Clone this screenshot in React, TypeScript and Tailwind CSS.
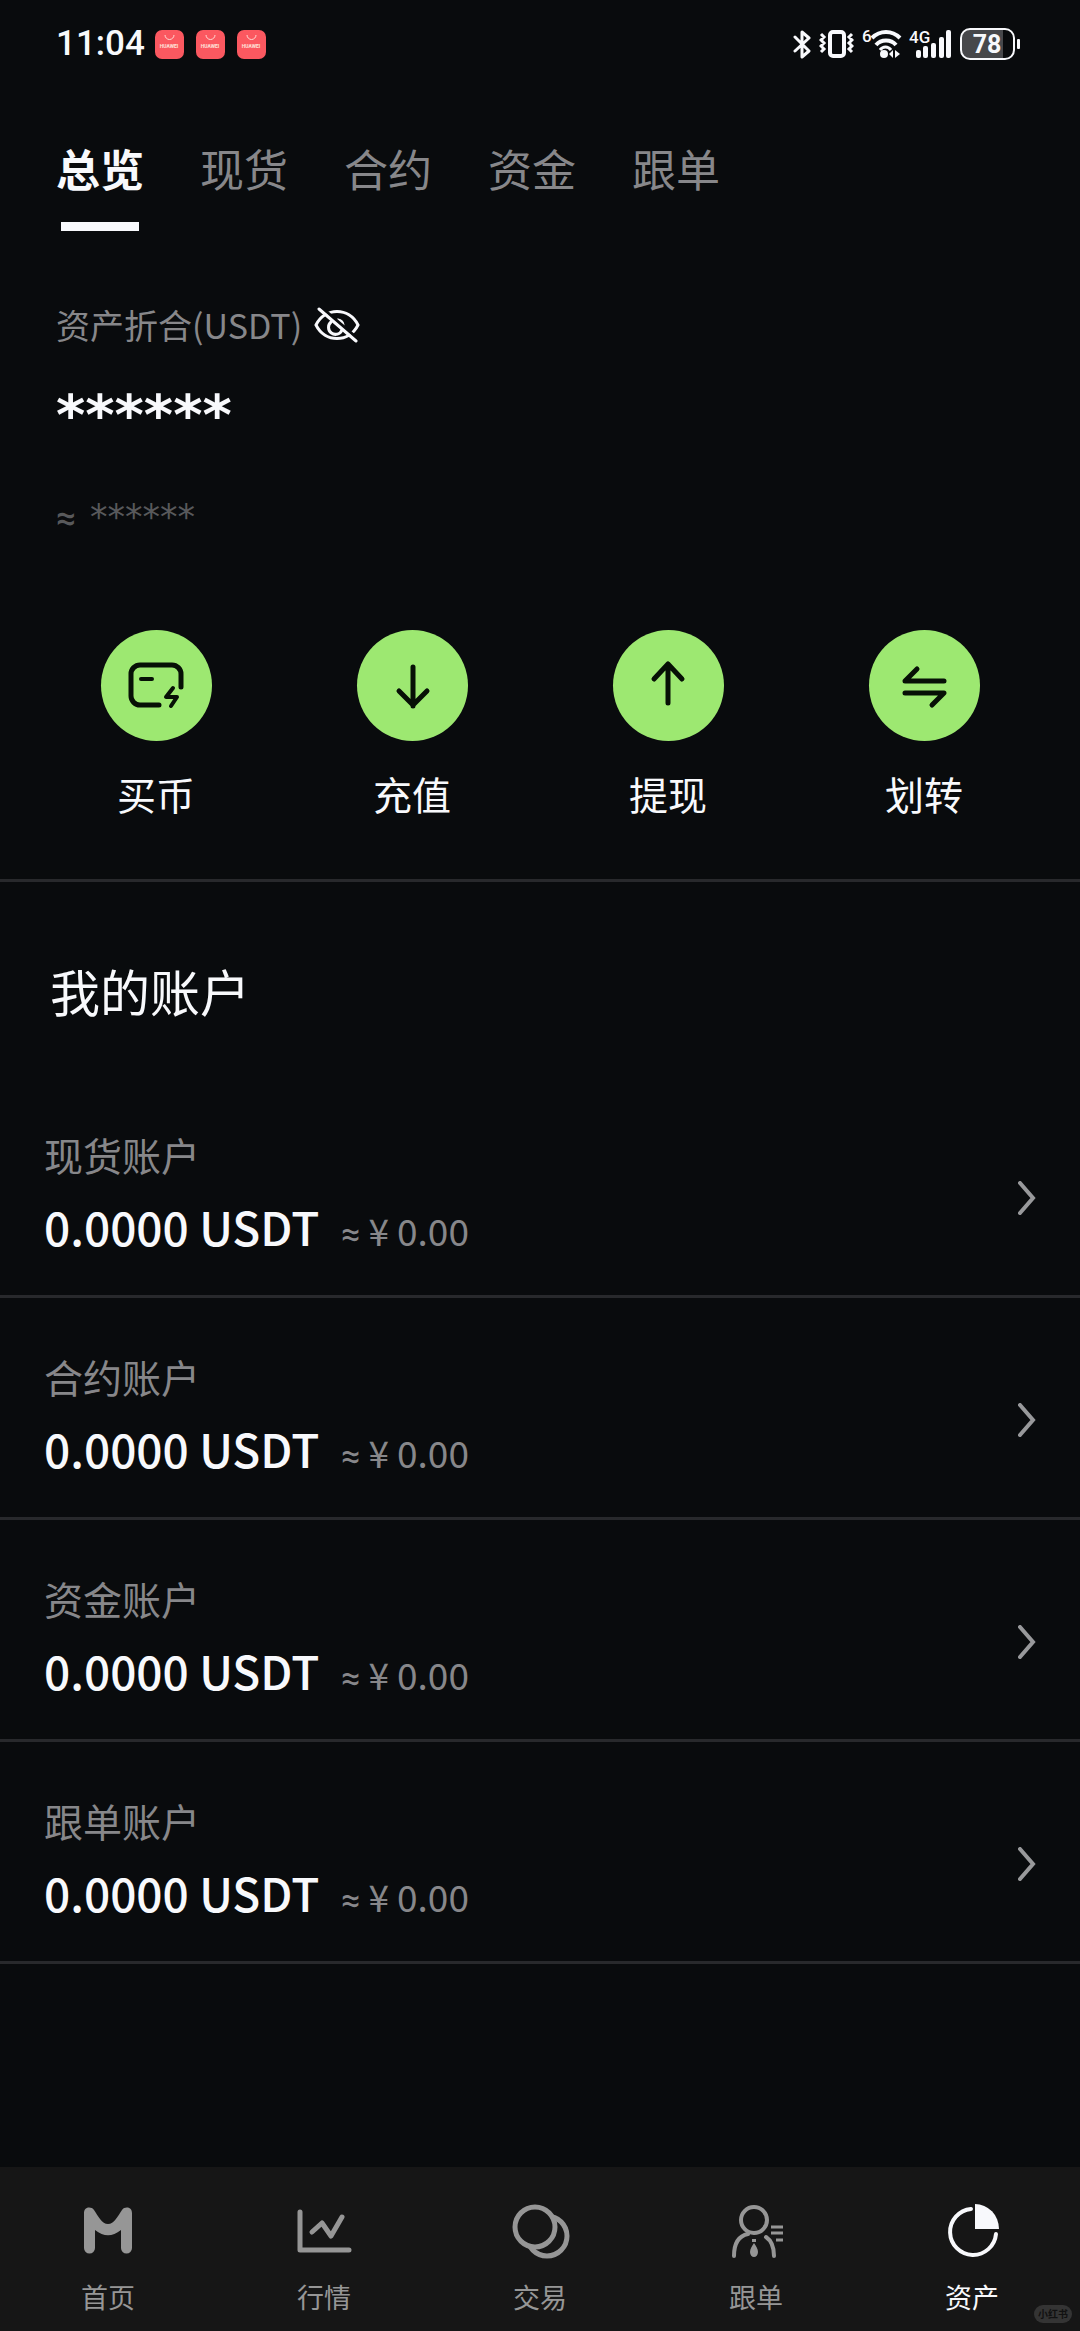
import { useState, type ReactNode } from "react";

const tabs = ["总览", "现货", "合约", "资金", "跟单"];

const accounts = [
  { name: "现货账户", amount: "0.0000", fiat: "0.00" },
  { name: "合约账户", amount: "0.0000", fiat: "0.00" },
  { name: "资金账户", amount: "0.0000", fiat: "0.00" },
  { name: "跟单账户", amount: "0.0000", fiat: "0.00" },
];

const actions: { label: string; icon: ReactNode }[] = [
  {
    label: "买币",
    icon: (
      <>
        <path d="M80 57V44a9 9 0 0 0-9-9H39a9 9 0 0 0-9 9v22a9 9 0 0 0 9 9h19" />
        <path d="M40 49h11M72 58l-7 9h11l-6 9" strokeWidth="4" />
      </>
    ),
  },
  { label: "充值", icon: <path d="M56 37v39M42 61l14 14 14-14" /> },
  { label: "提现", icon: <path d="M55 34v39M41 49l14-15 14 15" /> },
  { label: "划转", icon: <path d="M75 51H36l12-12M36 63h39L63 75" /> },
];

const navItems: { label: string; icon: ReactNode }[] = [
  {
    label: "首页",
    icon: (
      <path
        d="M8 14c0-6 7-7 10-3 4 6 8 14 14 14s10-8 14-14c3-4 10-3 10 3v35a5 5 0 0 1-11 0V31c-9 7-17 7-26 0v18a5 5 0 0 1-11 0z"
        fill="currentColor"
        stroke="none"
      />
    ),
  },
  {
    label: "行情",
    icon: (
      <>
        <path d="M8 13v38h49" />
        <path d="M20 33l10-9 9 13 11-19" />
      </>
    ),
  },
  {
    label: "交易",
    icon: (
      <>
        <circle cx="39" cy="37" r="20" />
        <circle cx="27" cy="28" r="20" fill="#161616" />
      </>
    ),
  },
  {
    label: "跟单",
    icon: (
      <g strokeWidth="4">
        <circle cx="30" cy="21" r="13" />
        <path d="M10 57c0-11 4-20 14-22M50 57c0-9-2-15-8-19" />
        <path d="M47 28h12M47 34h12M52 41h7" strokeWidth="3" strokeLinecap="butt" />
        <path
          d="M28 40h4v3h-4zM30 44c2 3 4 6 4 9s-2 5-4 5-4-2-4-5 2-6 4-9z"
          fill="currentColor"
          stroke="none"
        />
      </g>
    ),
  },
  {
    label: "资产",
    icon: (
      <>
        <path d="M31 10a23 23 0 1 0 25 25" strokeWidth="4" />
        <path d="M35 5a24 25 0 0 1 24 25H35z" fill="currentColor" stroke="none" />
      </>
    ),
  },
];

function StatusBar() {
  return (
    <header className="flex h-[88px] items-center justify-between pr-[59px] pl-14 font-[Roboto,sans-serif]">
      <div className="flex items-center gap-2.5">
        <span className="text-[35px] leading-[40px] font-medium">11:04</span>
        <div className="flex gap-3">
          {[0, 1, 2].map((i) => (
            <svg key={i} width="29" height="29" viewBox="0 0 29 29">
              <rect width="29" height="29" rx="7" fill="#fb5860" />
              <path d="M10 5a4 4 0 0 0 9 0" fill="none" stroke="#ffd9d4" />
              <text x="14" y="18" fontSize="5" fontWeight="700" fill="#ffe3dc" textAnchor="middle">
                HUAWEI
              </text>
            </svg>
          ))}
        </div>
      </div>

      <div className="flex gap-2">
        <svg width="18" height="38" viewBox="0 0 18 38" fill="none" stroke="currentColor" strokeWidth="3" strokeLinejoin="round" strokeLinecap="round">
          <path d="M2 12l14 14-7 6V7l7 6L2 26" />
        </svg>
        <svg width="35" height="38" viewBox="0 0 35 38" fill="none" stroke="currentColor" strokeWidth="4">
          <rect x="11" y="7" width="14" height="24" rx="3" />
          <path d="M2 9l3 3-3 3 3 3-3 3 3 3-3 3M33 9l-3 3 3 3-3 3 3 3-3 3 3 3" strokeWidth="3" />
        </svg>
        <svg width="40" height="38" viewBox="0 0 40 38" className="overflow-visible" fill="none" stroke="currentColor" strokeWidth="4">
          <text x="0" y="17" fontSize="17" fontWeight="500" fill="currentColor" stroke="none">6</text>
          <path d="M10 13c8-8 20-8 28 0M14 20c5-6 15-6 20 0" />
          <path d="M18 25c3-4 8-4 11 0" strokeWidth="3" />
          <circle cx="22" cy="29" r="4" fill="currentColor" stroke="none" />
          <path d="M31 25v8l-4-4zM33 25v8l5-4z" fill="currentColor" stroke="none" />
        </svg>
        <svg width="42" height="38" viewBox="0 0 42 38" className="overflow-visible" fill="currentColor">
          <text x="-1" y="18" fontSize="17" fontWeight="500">4G</text>
          <rect x="6" y="25" width="5" height="8" rx="2" />
          <rect x="13" y="21" width="5" height="12" rx="2" />
          <rect x="21" y="18" width="5" height="15" rx="2" />
          <rect x="29" y="12" width="5" height="21" rx="2" />
          <rect x="36" y="5" width="5" height="28" rx="2" />
        </svg>
        <svg width="61" height="38" viewBox="0 0 61 38">
          <path d="M10 4h33v30H10a9 9 0 0 1-9-9V13a9 9 0 0 1 9-9z" fill="#47484b" />
          <rect x="1" y="4" width="53" height="30" rx="9" fill="none" stroke="currentColor" strokeWidth="2" />
          <rect x="57" y="14" width="3" height="10" rx="1" fill="currentColor" />
          <text x="27" y="28" fontSize="25" fontWeight="700" fill="currentColor" textAnchor="middle">78</text>
        </svg>
      </div>
    </header>
  );
}

function EyeOffIcon() {
  return (
    <svg width="46" height="36" viewBox="0 0 46 36" fill="none" stroke="currentColor" strokeWidth="3" strokeLinecap="round">
      <path d="M2 18C11 0 35 0 44 18 35 36 11 36 2 18z" />
      <path d="M17 15a7 7 0 1 0 11 8M24 13a6 6 0 0 1 5 5" />
      <path d="M7 0l37 32" stroke="#090b0d" />
      <path d="M5 2l37 32" />
    </svg>
  );
}

export default function App() {
  const [tab, setTab] = useState("总览");
  const [page, setPage] = useState("资产");

  return (
    <div className="flex min-h-screen flex-col bg-[#090b0d] font-['Noto_Sans_CJK_SC',sans-serif] text-[#f8f9fc]">
      <StatusBar />

      <main className="flex-1">
        <div className="flex gap-14 px-14 pt-12">
          {tabs.map((t) => (
            <button
              key={t}
              type="button"
              onClick={() => setTab(t)}
              className={`flex flex-col items-center text-[44px] leading-[64px] ${
                t === tab ? "font-bold" : "text-[#87878a]"
              }`}
            >
              {t}
              {t === tab && <span className="mt-[22px] h-[9px] w-[78px] bg-[#f8f9fc]" />}
            </button>
          ))}
        </div>

        <section className="px-14 pt-[70px]">
          <div className="flex items-center gap-3">
            <h2 className="text-[34px] leading-[48px] text-[#87878a]">资产折合(USDT)</h2>
            <button type="button" aria-label="显示资产">
              <EyeOffIcon />
            </button>
          </div>
          <p className="mt-[34px] font-['DejaVu_Sans',sans-serif] text-[56px] leading-[64px] font-bold">******</p>
          <p className="mt-11 flex items-center gap-3.5 text-[35px] leading-[48px] text-[#58595b]">
            <span className="pt-1 font-[Roboto,sans-serif] font-medium">≈</span>
            <span className="font-['DejaVu_Sans',sans-serif]">******</span>
          </p>
        </section>

        <div className="mt-[87px] grid grid-cols-4 border-b-3 border-[#28292c] px-7 pb-[58px]">
          {actions.map(({ label, icon }) => (
            <button key={label} type="button" className="flex flex-col items-center gap-6 text-[39px] leading-[56px]">
              <svg width="111" height="111" viewBox="0 0 111 111" className="rounded-full bg-[#9de871]" fill="none" stroke="#071006" strokeWidth="5" strokeLinecap="round" strokeLinejoin="round">
                {icon}
              </svg>
              {label}
            </button>
          ))}
        </div>

        <h1 className="px-[50px] pt-[72px] pb-[50px] text-[50px] leading-[72px]">我的账户</h1>

        <ul>
          {accounts.map(({ name, amount, fiat }) => (
            <li key={name} className="border-b-3 border-[#28292c]">
              <a href="#" className="flex h-[219px] items-center justify-between px-11 pt-6">
                <div>
                  <p className="text-[39px] leading-[56px] text-[#87878a]">{name}</p>
                  <p className="mt-2 flex items-baseline gap-[22px] text-[46px] leading-[72px] font-medium">
                    {amount} USDT
                    <span className="flex items-baseline gap-2 text-[37px] font-normal text-[#87878a]">
                      <span className="font-[Roboto,sans-serif] text-[34px]">≈</span>
                      <span>¥</span>
                      <span>{fiat}</span>
                    </span>
                  </p>
                </div>
                <svg width="18" height="34" viewBox="0 0 18 34" fill="none" stroke="#98999b" strokeWidth="4" strokeLinecap="round">
                  <path d="M2 2l13 15L2 32" />
                </svg>
              </a>
            </li>
          ))}
        </ul>
      </main>

      <nav className="relative grid grid-cols-5 bg-[#161616] pt-8 pb-3.5">
        {navItems.map(({ label, icon }) => (
          <button
            key={label}
            type="button"
            onClick={() => setPage(label)}
            className={`flex flex-col items-center gap-3.5 text-[27px] leading-[40px] ${
              label === page ? "text-[#f8f9fc]" : "text-[#969696]"
            }`}
          >
            <svg width="64" height="64" viewBox="0 0 64 64" fill="none" stroke="currentColor" strokeWidth="5" strokeLinecap="round" strokeLinejoin="round">
              {icon}
            </svg>
            {label}
          </button>
        ))}
        <span className="absolute right-2 bottom-2 rounded-full bg-[#343434] px-1 text-[10px] leading-[18px] font-bold text-[#111111]">
          小红书
        </span>
      </nav>
    </div>
  );
}
